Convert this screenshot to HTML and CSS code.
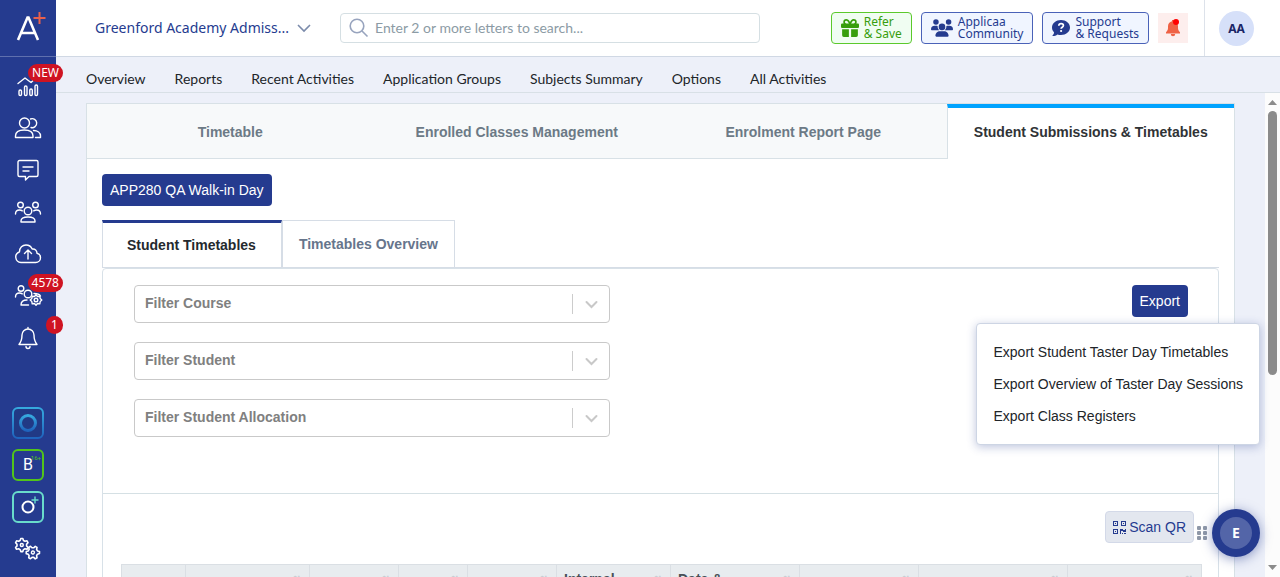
FILE: index.html
```
<!DOCTYPE html>
<html lang="en">
<head>
    <meta charset="UTF-8">
    <meta name="viewport" content="width=device-width, initial-scale=1.0">
    <title>Student Submissions &amp; Timetables</title>
    <link rel="stylesheet" href="styles.css">
</head>
<body>
    <aside class="sidebar">
        <a href="#" class="logo" aria-label="Home">
            <svg width="32" height="32" viewBox="0 0 32 32" fill="none">
                <path d="M6 28 15.500 5.500h1L26 28M9.500 21h13" stroke="#fff" stroke-width="2.600"/>
                <path d="M27.500 0v12M21.500 6h12" stroke="#e8604c" stroke-width="2"/>
            </svg>
        </a>
        <nav class="side-nav">
            <a href="#" aria-label="Dashboard">
                <svg width="28" height="28" viewBox="0 0 28 28">
                    <path d="M4 11.500 11 6l6 4.500L24 4"/>
                    <rect x="5" y="18" width="2.500" height="5.500" rx="1.200"/>
                    <rect x="10.500" y="14" width="2.500" height="9.500" rx="1.200"/>
                    <rect x="15.800" y="17" width="2.500" height="6.500" rx="1.200"/>
                    <rect x="21" y="13" width="2.500" height="10.500" rx="1.200"/>
                </svg>
                <span class="badge">NEW</span>
            </a>
            <a href="#" aria-label="Students">
                <svg width="28" height="28" viewBox="0 0 28 28">
                    <circle cx="10.500" cy="9" r="5"/>
                    <path d="M1.500 23.500v-1.500c0-4 3.500-6 8.700-6s8.800 2 8.800 6v1.500z"/>
                    <path d="M16.500 5a4.500 4.500 0 1 1 .5 8.500M19.500 16.500c4 0 7 2 7 5.500v1.500h-5"/>
                </svg>
            </a>
            <a href="#" aria-label="Messages">
                <svg width="28" height="28" viewBox="0 0 28 28">
                    <path d="M5.500 4.500h17a1.500 1.500 0 0 1 1.500 1.500v13a1.500 1.500 0 0 1-1.500 1.500H15L11.500 24v-3.500h-6A1.500 1.500 0 0 1 4 19V6a1.500 1.500 0 0 1 1.500-1.500zM9 11h10M9 15h6"/>
                </svg>
            </a>
            <a href="#" aria-label="Groups">
                <svg width="28" height="28" viewBox="0 0 28 28">
                    <circle cx="6.500" cy="7" r="2.800"/>
                    <circle cx="21.500" cy="7" r="2.800"/>
                    <circle cx="14" cy="13" r="3.800"/>
                    <path d="M1.500 16c0-2.800 1.500-4 4-4 1 0 2 .3 2.800.8M26.500 16c0-2.800-1.500-4-4-4-1 0-2 .3-2.800.8M7 24v-1c0-2.600 2.500-4 7-4s7 1.400 7 4v1z"/>
                </svg>
            </a>
            <a href="#" aria-label="Upload">
                <svg width="28" height="28" viewBox="0 0 28 28">
                    <path d="M7 22.500a5.500 5.500 0 0 1-1.500-10.700C5.500 7.500 8.500 5 12 5c3 0 5.200 1.700 6.200 4 2.800-.4 4.800 1.500 4.800 4.200 2 .4 3.500 2.200 3.500 4.500a4.800 4.800 0 0 1-4.800 4.800z"/>
                    <path d="M14 19v-8.500M10.500 13.500 14 10l3.500 3.500"/>
                </svg>
            </a>
            <a href="#" aria-label="User settings">
                <svg width="28" height="28" viewBox="0 0 28 28">
                    <circle cx="7" cy="6.500" r="2.800"/>
                    <circle cx="14" cy="12" r="3.800"/>
                    <path d="M1.500 15c0-2.800 1.500-4 4-4 1 0 2 .3 2.800.8M20 11.500c3 0 5.500.8 6.500 2.500M14.500 23H7c0-3.500 2-5 6-5"/>
                    <g transform="translate(0 -1)">
                        <circle cx="22" cy="19" r="1.800"/>
                        <path d="m22 13.800 1.500 1.700 2.300-.3.400 2.300 1.600 1.500-1.600 1.500-.4 2.300-2.300-.3-1.500 1.700-1.500-1.700-2.300.3-.4-2.300-1.600-1.500 1.600-1.500.4-2.300 2.300.3z"/>
                    </g>
                </svg>
                <span class="badge">4578</span>
            </a>
            <a href="#" aria-label="Notifications">
                <svg width="28" height="28" viewBox="0 0 28 28">
                    <path d="M14 5a6 6 0 0 0-6 6c0 5-1 7-3 9.500h18C21 18 20 16 20 11a6 6 0 0 0-6-6zM14 5V3.500M12 22.500a2 2 0 0 0 4 0"/>
                </svg>
                <span class="badge">1</span>
            </a>
        </nav>
        <nav class="side-nav side-apps">
            <a href="#" aria-label="Applicaa One">
                <svg class="app" width="32" height="32" viewBox="0 0 32 32">
                    <defs>
                        <linearGradient id="ring" x1="0" y1="0" x2="0" y2="1">
                            <stop offset="0" stop-color="#36a9de"/>
                            <stop offset="1" stop-color="#1f64bd"/>
                        </linearGradient>
                    </defs>
                    <rect x="1" y="1" width="30" height="30" rx="5" fill="#213985" stroke="url(#ring)" stroke-width="2"/>
                    <circle cx="16" cy="16" r="7.500" stroke="url(#ring)" stroke-width="3"/>
                </svg>
            </a>
            <a href="#" class="app-box">B<sup>16+</sup></a>
            <a href="#" aria-label="Open Events">
                <svg class="app" width="32" height="32" viewBox="0 0 32 32">
                    <rect x="1" y="1" width="30" height="30" rx="5" stroke="#69dccb" stroke-width="2"/>
                    <circle cx="16" cy="16" r="5.500" stroke="#fff" stroke-width="2"/>
                    <path d="M23 6v6M20 9h6" stroke="#69dccb" stroke-width="1.400"/>
                </svg>
            </a>
            <a href="#" aria-label="Settings">
                <svg width="28" height="28" viewBox="0 -2 28 28">
                    <g id="gear">
                        <path stroke-width="1.600" d="M6.800 1.500h2l.7 2 1.500.8 2-.5 1 1.800-1.400 1.600v1.700l1.400 1.600-1 1.800-2-.5-1.500.8-.7 2h-2l-.7-2-1.500-.8-2 .5-1-1.800L3 8.900V7.200L1.600 5.600l1-1.800 2 .5 1.500-.8z"/>
                        <circle cx="7.800" cy="8" r="1.500"/>
                    </g>
                    <use href="#gear" transform="rotate(30 20 15) translate(11.500 8)"/>
                </svg>
            </a>
        </nav>
    </aside>

    <div class="main">
        <header class="topbar">
            <button type="button" class="school">
                Greenford Academy Admiss...
                <svg width="14" height="8" viewBox="0 0 14 8" fill="none" stroke="#7b8bab" stroke-width="1.600"><path d="m1 1 6 6 6-6"/></svg>
            </button>
            <label class="search">
                <svg width="20" height="20" viewBox="0 0 20 20" fill="none" stroke="#98a4be" stroke-width="1.600"><circle cx="8" cy="8" r="6.800"/><path d="m13 13 5.500 5.500"/></svg>
                <input type="search" placeholder="Enter 2 or more letters to search..." aria-label="Search">
            </label>
            <div class="top-links">
                <a href="#" class="pill pill-green">
                    <svg width="18" height="18" viewBox="0 0 512 512" fill="currentColor"><path d="M190 69 225 128H152a40 40 0 0 1 0-80c15 0 29 8 38 21zM64 88c0 14 4 28 10 40H32a32 32 0 0 0-32 32v64a32 32 0 0 0 32 32h448a32 32 0 0 0 32-32v-64a32 32 0 0 0-32-32h-42c6-12 10-26 10-40a88 88 0 0 0-88-88c-32 0-62 17-78 45l-26 43-26-44A90 90 0 0 0 152 0a88 88 0 0 0-88 88zm336 0a40 40 0 0 1-40 40h-73l35-59c8-13 22-21 38-21a40 40 0 0 1 40 40zM32 288v176a48 48 0 0 0 48 48h144V288zm256 224h144a48 48 0 0 0 48-48V288H288z"/></svg>
                    <span>Refer<br>&amp; Save</span>
                </a>
                <a href="#" class="pill">
                    <svg width="22" height="18" viewBox="0 0 640 512" fill="currentColor"><path d="M144 0a80 80 0 1 1 0 160 80 80 0 1 1 0-160zm368 0a80 80 0 1 1 0 160 80 80 0 1 1 0-160zM0 299a107 107 0 0 1 107-107h43c16 0 31 4 44 10a128 128 0 0 0 41 118H21c-12 0-21-10-21-21zm405 21a128 128 0 0 0 41-118c14-6 28-10 44-10h43a107 107 0 0 1 107 107c0 11-9 21-21 21zM224 224a96 96 0 1 1 192 0 96 96 0 1 1-192 0zM128 485c0-73 60-133 133-133h118c73 0 133 60 133 133 0 15-12 27-27 27H155c-15 0-27-12-27-27z"/></svg>
                    <span>Applicaa<br>Community</span>
                </a>
                <a href="#" class="pill">
                    <svg width="18" height="18" viewBox="0 0 18 18" fill="currentColor"><path d="M9 1C4 1 0 4.300 0 8.500c0 2 .8 3.600 2.100 4.900-.2 1.300-.9 2.500-2 3.500 2 .2 3.900-.4 5.300-1.500 1.100.4 2.300.6 3.600.6 5 0 9-3.300 9-7.500S14 1 9 1z"/><path d="M6.800 6.700c.1-1.400 1-2.100 2.300-2.100s2.300.8 2.300 2c0 1.600-2.300 1.600-2.300 3.200" fill="none" stroke="#fff" stroke-width="1.700"/><circle cx="9.100" cy="12" r="1.100" fill="#fff"/></svg>
                    <span>Support<br>&amp; Requests</span>
                </a>
                <button type="button" class="alert-btn" aria-label="Alerts">
                    <svg width="16" height="18" viewBox="0 0 16 18"><path d="M7 1h2v1.200c2.500.5 4 2.400 4 5V9c0 1.800.7 3 2 4.300V14.500H1v-1.200C2.300 12 3 10.800 3 9V7.200c0-2.600 1.500-4.500 4-5zM5.800 15h4.400a2.200 2.200 0 0 1-4.400 0z" fill="#ef6245"/><circle cx="11" cy="3" r="3" fill="#f00"/></svg>
                </button>
            </div>
            <div class="account">
                <button type="button" class="avatar">AA</button>
            </div>
        </header>

        <nav class="menu">
            <a href="#">Overview</a>
            <a href="#">Reports</a>
            <a href="#">Recent Activities</a>
            <a href="#">Application Groups</a>
            <a href="#">Subjects Summary</a>
            <a href="#">Options</a>
            <a href="#">All Activities</a>
        </nav>

        <div class="scroll-area">
            <main class="panel">
                <div class="tabs">
                    <a href="#">Timetable</a>
                    <a href="#">Enrolled Classes Management</a>
                    <a href="#">Enrolment Report Page</a>
                    <a href="#" class="active">Student Submissions &amp; Timetables</a>
                </div>
                <div class="panel-body">
                    <button type="button" class="btn">APP280 QA Walk-in Day</button>
                    <div class="subtabs">
                        <a href="#" class="active">Student Timetables</a>
                        <a href="#">Timetables Overview</a>
                    </div>
                    <section class="box">
                        <div class="filters">
                            <div class="selects">
                                <div class="select">
                                    <select aria-label="Filter Course"><option>Filter Course</option></select>
                                    <svg width="20" height="20" viewBox="0 0 20 20"><path d="m5 8 5 5 5-5"/></svg>
                                </div>
                                <div class="select">
                                    <select aria-label="Filter Student"><option>Filter Student</option></select>
                                    <svg width="20" height="20" viewBox="0 0 20 20"><path d="m5 8 5 5 5-5"/></svg>
                                </div>
                                <div class="select">
                                    <select aria-label="Filter Student Allocation"><option>Filter Student Allocation</option></select>
                                    <svg width="20" height="20" viewBox="0 0 20 20"><path d="m5 8 5 5 5-5"/></svg>
                                </div>
                            </div>
                            <div class="export">
                                <button type="button" class="btn">Export</button>
                                <div class="dropdown">
                                    <a href="#">Export Student Taster Day Timetables</a>
                                    <a href="#">Export Overview of Taster Day Sessions</a>
                                    <a href="#">Export Class Registers</a>
                                </div>
                            </div>
                        </div>
                        <div class="results">
                            <div class="toolbar">
                                <button type="button" class="btn btn-light">
                                    <svg width="13" height="13" viewBox="0 0 13 13" fill="currentColor"><path fill-rule="evenodd" d="M0 0h5v5H0zm1 1v3h3V1zM8 0h5v5H8zm1 1v3h3V1zM0 8h5v5H0zm1 1v3h3V9z"/><path d="M2 2h1v1H2zM10 2h1v1h-1zM2 10h1v1H2zM7 8h3v1h2V8h1v3h-3v-1H8v3H7zM9 12h1v1H9zM11 12h2v1h-2z"/></svg>
                                    Scan QR
                                </button>
                            </div>
                            <table>
                                <colgroup>
                                    <col class="col-check">
                                    <col class="col-name">
                                    <col class="col-small">
                                    <col class="col-tiny">
                                    <col class="col-small">
                                    <col class="col-internal">
                                    <col class="col-date">
                                    <col class="col-status">
                                    <col class="col-course">
                                    <col class="col-last">
                                </colgroup>
                                <thead>
                                    <tr>
                                        <th></th>
                                        <th><i>&#8645;</i></th>
                                        <th><i>&#8645;</i></th>
                                        <th><i>&#8645;</i></th>
                                        <th><i>&#8645;</i></th>
                                        <th><i>&#8645;</i>Internal</th>
                                        <th><i>&#8645;</i>Date &amp;</th>
                                        <th><i>&#8645;</i></th>
                                        <th><i>&#8645;</i></th>
                                        <th><i>&#8645;</i></th>
                                    </tr>
                                </thead>
                            </table>
                        </div>
                    </section>
                </div>
            </main>
            <div class="scrollbar">
                <svg width="9" height="5" viewBox="0 0 9 5"><path d="M0 5 4.500 0 9 5z"/></svg>
                <div class="track"><div class="thumb"></div></div>
                <svg width="9" height="5" viewBox="0 0 9 5"><path d="M0 0h9L4.500 5z"/></svg>
            </div>
        </div>
    </div>

    <div class="helper">
        <svg width="10" height="14" viewBox="0 0 10 14" fill="#8f98a8"><rect width="4" height="4" rx="1"/><rect x="6" width="4" height="4" rx="1"/><rect y="5" width="4" height="4" rx="1"/><rect x="6" y="5" width="4" height="4" rx="1"/><rect y="10" width="4" height="4" rx="1"/><rect x="6" y="10" width="4" height="4" rx="1"/></svg>
        <button type="button"><span>E</span></button>
    </div>
</body>
</html>
```
FILE: styles.css
```
* {
    box-sizing: border-box;
}
body {
    margin: 0;
    display: flex;
    height: 100vh;
    overflow: hidden;
    background: #edf0f9;
    color: #212529;
    font: 14px/20px "Liberation Sans", Arial, sans-serif;
}
a {
    color: inherit;
    text-decoration: none;
}
button, input, select {
    font: inherit;
    color: inherit;
}
button {
    border: 0;
    padding: 0;
    cursor: pointer;
}
svg {
    flex: none;
    overflow: visible;
}

/* Sidebar */
.sidebar {
    flex: none;
    display: flex;
    flex-direction: column;
    width: 56px;
    padding-bottom: 7px;
    background: #253b8f;
    z-index: 2;
}
.logo {
    height: 57px;
    padding: 12px;
    border-bottom: 1px solid #5f70ae;
}
.side-nav {
    display: flex;
    flex-direction: column;
    padding-top: 8px;
}
.side-nav a {
    position: relative;
    height: 42px;
    display: flex;
    align-items: center;
    justify-content: center;
}
.side-nav svg {
    fill: none;
    stroke: #fff;
    stroke-width: 1.4;
    stroke-linecap: round;
    stroke-linejoin: round;
}
.side-nav svg.app {
    stroke: none;
}
.side-apps {
    margin-top: auto;
}
.badge {
    position: absolute;
    top: -1px;
    right: -7px;
    min-width: 17px;
    height: 18px;
    padding: 0 4px;
    border-radius: 9px;
    background: #cf1322;
    color: #fff;
    font: 12px/18px "Noto Sans", sans-serif;
    text-align: center;
}
.side-nav .app-box {
    width: 32px;
    height: 32px;
    margin: 5px 12px;
    border: 2px solid #52c41a;
    border-radius: 6px;
    color: #fff;
    font: 16px/28px Roboto, sans-serif;
}
.app-box sup {
    position: absolute;
    top: 3px;
    right: 1px;
    color: #52c41a;
    font-size: 6px;
    line-height: 7px;
}

/* Header */
.main {
    flex: 1;
    min-width: 0;
    display: flex;
    flex-direction: column;
}
.topbar {
    flex: none;
    display: flex;
    align-items: center;
    height: 57px;
    padding-left: 39px;
    background: #fff;
    border-bottom: 1px solid #d0d8e4;
    font-family: "Noto Sans", sans-serif;
}
.school {
    display: flex;
    align-items: center;
    gap: 8px;
    margin-right: 29px;
    background: none;
    color: #253b8f;
    white-space: nowrap;
}
.search {
    flex: 0 1 420px;
    display: flex;
    align-items: center;
    gap: 6px;
    height: 30px;
    padding: 0 8px;
    border: 1px solid #d5dfe3;
    border-radius: 4px;
}
.search input {
    flex: 1;
    min-width: 0;
    border: 0;
    padding: 0;
    outline: 0;
    background: none;
    font: 14px/20px Lato, sans-serif;
}
.search input::placeholder {
    color: #8c9ba5;
}
.top-links {
    display: flex;
    align-items: center;
    gap: 9px;
    margin-left: auto;
}
.pill {
    display: flex;
    align-items: center;
    gap: 5px;
    height: 32px;
    padding: 0 9px;
    border: 1px solid #4a62b8;
    border-radius: 4px;
    background: #f0f5ff;
    color: #253b8f;
    font-size: 12px;
    line-height: 12px;
    white-space: nowrap;
}
.pill-green {
    border-color: #5bc92c;
    background: #f0fdf2;
    color: #389e0d;
}
.alert-btn {
    width: 30px;
    height: 30px;
    display: flex;
    align-items: center;
    justify-content: center;
    background: #fdeeed;
}
.account {
    display: flex;
    align-items: center;
    height: 56px;
    margin-left: 16px;
    padding: 0 26px 0 14px;
    border-left: 1px solid #dde2ea;
}
.avatar {
    width: 35px;
    height: 35px;
    border-radius: 50%;
    background: #d6e0f9;
    color: #1a2566;
    font: bold 12px/35px "Noto Sans", sans-serif;
}
.menu {
    flex: none;
    display: flex;
    gap: 29px;
    height: 36px;
    padding: 12px 30px 0;
    border-bottom: 1px solid #d8e0e6;
    font-family: Lato, sans-serif;
    white-space: nowrap;
}

/* Page */
.scroll-area {
    flex: 1;
    min-height: 0;
    display: flex;
    overflow: hidden;
}
.panel {
    flex: 1;
    min-width: 0;
    margin: 10px 30px 0;
    border: 1px solid #d8e1e6;
    border-bottom: 0;
    background: #fff;
}
.tabs {
    display: flex;
    font-weight: bold;
    color: #6c7a86;
    text-align: center;
}
.tabs a {
    flex: 1;
    height: 55px;
    padding-top: 18px;
    background: #f7f9fa;
    border-bottom: 1px solid #d8e1e6;
}
.tabs .active {
    padding-top: 14px;
    background: #fff;
    border-top: 4px solid #00a3ff;
    border-left: 1px solid #d8e1e6;
    border-bottom: 0;
    color: #303336;
}
.panel-body {
    padding: 15px;
}
.btn {
    height: 32px;
    padding: 0 8px;
    border-radius: 4px;
    background: #253b8f;
    color: #fff;
}
.subtabs {
    display: flex;
    margin-top: 14px;
    border-bottom: 1px solid #d6dde6;
    color: #66758c;
    font-weight: bold;
}
.subtabs a {
    height: 47px;
    padding: 13px 16px 0;
    border: 1px solid #d6dde6;
    border-width: 1px 1px 0;
}
.subtabs .active {
    padding: 12px 25px 0 24px;
    border-top: 3px solid #253b8f;
    color: #24292e;
}
.box {
    border: 1px solid #d8e1e8;
    border-radius: 4px 4px 0 0;
}
.filters {
    display: flex;
    justify-content: space-between;
    align-items: flex-start;
    height: 225px;
    padding: 16px 30px 0 31px;
    border-bottom: 1px solid #d5e0e4;
}
.selects {
    flex: 0 1 476px;
    display: grid;
    gap: 19px;
}
.select {
    position: relative;
}
.select select {
    display: block;
    width: 100%;
    height: 38px;
    padding: 0 10px 2px;
    border: 1px solid #c9c9c9;
    border-radius: 4px;
    background: #fff;
    color: #808080;
    font-weight: bold;
    appearance: none;
}
.select svg {
    position: absolute;
    top: 9px;
    right: 0;
    width: 38px;
    border-left: 1px solid #ccc;
    fill: none;
    stroke: #c8c8c8;
    stroke-width: 2;
    stroke-linecap: round;
}
.export {
    position: relative;
}
.dropdown {
    position: absolute;
    top: 38px;
    right: -72px;
    padding: 12px 16px;
    border: 1px solid #cdd5e4;
    border-radius: 4px;
    background: #fff;
    box-shadow: 0 2px 10px rgba(37, 59, 143, 0.3);
    white-space: nowrap;
    z-index: 5;
}
.dropdown a {
    display: block;
    line-height: 32px;
}
.results {
    padding: 17px 17px 0 18px;
}
.toolbar {
    display: flex;
    justify-content: flex-end;
    padding-right: 7px;
}
.btn-light {
    display: flex;
    align-items: center;
    gap: 3px;
    padding: 0 7px;
    border: 1px solid #d3d9e8;
    background: #e3e7ef;
    color: #253b8f;
}
table {
    width: 100%;
    margin-top: 21px;
    table-layout: fixed;
    border-collapse: collapse;
}
th {
    height: 60px;
    padding: 4px 7px;
    border: 1px solid #dadfe4;
    background: #e8ecef;
    color: #495057;
    text-align: left;
    vertical-align: top;
}
th i {
    float: right;
    color: #c9ced4;
    font-size: 12px;
    font-style: normal;
    line-height: 24px;
}
.col-check { width: 64px; }
.col-name { width: 124px; }
.col-small { width: 89px; }
.col-tiny { width: 69px; }
.col-internal { width: 114px; }
.col-date { width: 129px; }
.col-status { width: 119px; }
.col-course { width: 149px; }
.col-last { width: 134px; }

.scrollbar {
    flex: none;
    display: flex;
    flex-direction: column;
    align-items: center;
    gap: 6px;
    width: 15px;
    padding: 7px 0;
    background: #fcfcfc;
    fill: #8b8b8b;
}
.track {
    flex: 1;
    width: 9px;
}
.thumb {
    height: 59%;
    border-radius: 5px;
    background: #8b8b8b;
}

/* Floating helper button */
.helper {
    position: fixed;
    right: 20px;
    bottom: 20px;
    display: flex;
    align-items: center;
    gap: 5px;
    z-index: 6;
}
.helper button {
    width: 48px;
    height: 48px;
    padding: 8px;
    border-radius: 50%;
    background: #253b8f;
    box-shadow: 0 2px 12px rgba(37, 59, 143, 0.5);
}
.helper span {
    display: block;
    border-radius: 50%;
    background: #5365a8;
    color: #fff;
    font: bold 14px/32px "Noto Sans", sans-serif;
}
```
